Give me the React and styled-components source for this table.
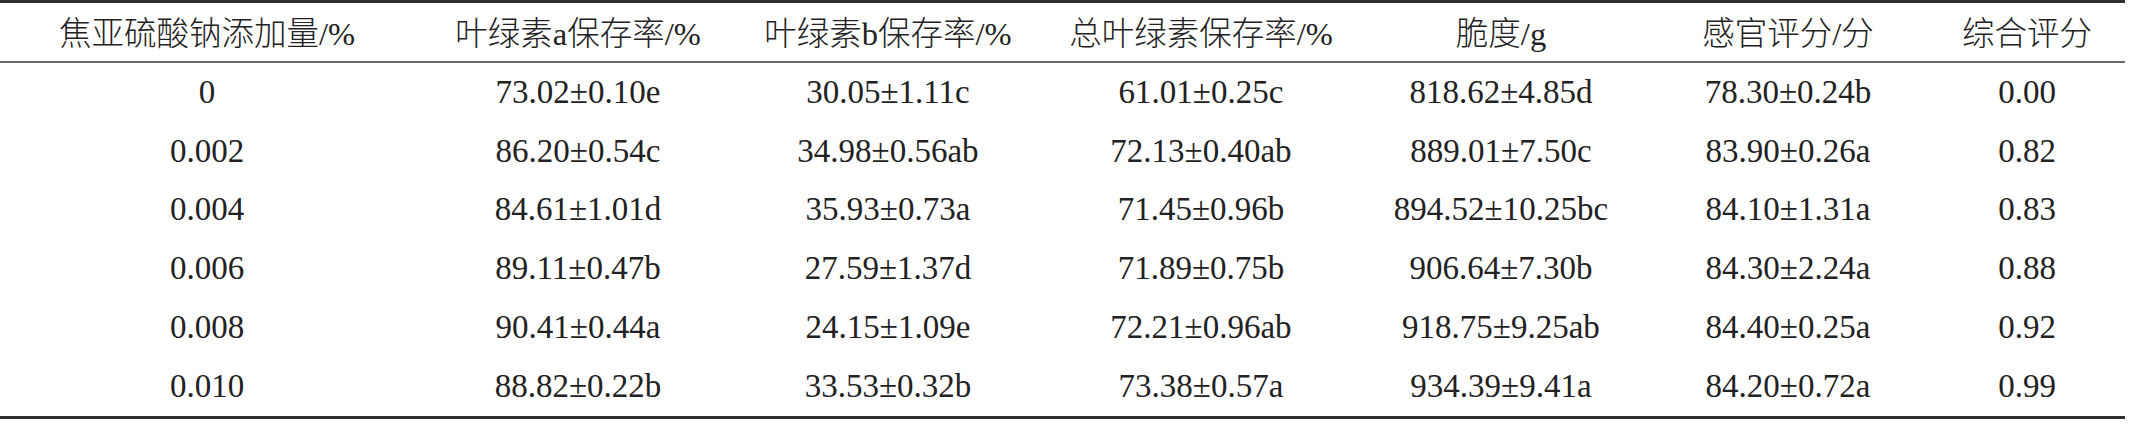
import React from "react";
import styled, { createGlobalStyle } from "styled-components";

const columns = [
  "焦亚硫酸钠添加量/%",
  "叶绿素a保存率/%",
  "叶绿素b保存率/%",
  "总叶绿素保存率/%",
  "脆度/g",
  "感官评分/分",
  "综合评分",
];

const rows = [
  ["0", "73.02±0.10e", "30.05±1.11c", "61.01±0.25c", "818.62±4.85d", "78.30±0.24b", "0.00"],
  ["0.002", "86.20±0.54c", "34.98±0.56ab", "72.13±0.40ab", "889.01±7.50c", "83.90±0.26a", "0.82"],
  ["0.004", "84.61±1.01d", "35.93±0.73a", "71.45±0.96b", "894.52±10.25bc", "84.10±1.31a", "0.83"],
  ["0.006", "89.11±0.47b", "27.59±1.37d", "71.89±0.75b", "906.64±7.30b", "84.30±2.24a", "0.88"],
  ["0.008", "90.41±0.44a", "24.15±1.09e", "72.21±0.96ab", "918.75±9.25ab", "84.40±0.25a", "0.92"],
  ["0.010", "88.82±0.22b", "33.53±0.32b", "73.38±0.57a", "934.39±9.41a", "84.20±0.72a", "0.99"],
];

function App() {
  return (
    <>
      <GlobalStyle />
      <Table>
        <HeadRow>
          {columns.map((c) => (
            <HeadCell key={c}>{c}</HeadCell>
          ))}
        </HeadRow>
        {rows.map((r) => (
          <Row key={r[0]}>
            {r.map((v, i) => (
              <Cell key={i}>{v}</Cell>
            ))}
          </Row>
        ))}
      </Table>
    </>
  );
}

export default App;

const GlobalStyle = createGlobalStyle`
  body {
    margin: 0;
    background: #fff;
  }
`;

const Table = styled.div`
  width: 2125px;
  border-top: 3px solid #2e2e2e;
  border-bottom: 3px solid #2e2e2e;
  font-family: "Liberation Serif", "Noto Sans CJK SC", serif;
  color: #222;
`;

const HeadRow = styled.div`
  display: grid;
  grid-template-columns: 414px 328px 292px 334px 266px 308px 170px;
  height: 58px;
  align-items: center;
  border-bottom: 2px solid #6a6a6a;
`;

const Row = styled.div`
  display: grid;
  grid-template-columns: 414px 328px 292px 334px 266px 308px 170px;
  height: 58.8px;
  align-items: center;
`;

const HeadCell = styled.div`
  text-align: center;
  font-size: 32.5px;
  font-weight: 300;
  white-space: nowrap;
  padding-bottom: 4px;
`;

const Cell = styled.div`
  text-align: center;
  font-size: 33px;
  white-space: nowrap;
`;
